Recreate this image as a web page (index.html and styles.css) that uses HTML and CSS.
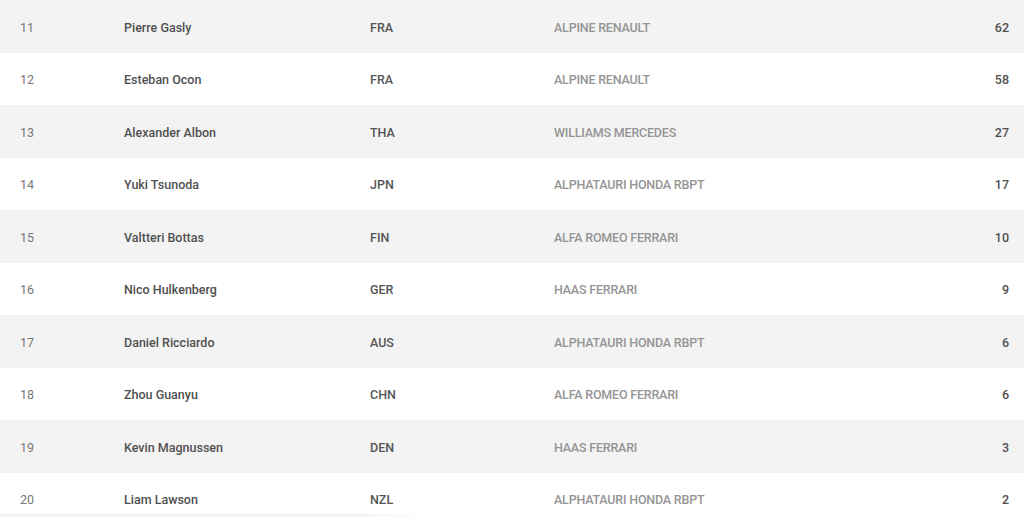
FILE: index.html
```html
<!DOCTYPE html>
<html lang="en">
<head>
<meta charset="utf-8">
<title>Driver Standings</title>
<link rel="stylesheet" href="styles.css">
</head>
<body>
<div class="standings">
  <table class="table">
    <colgroup>
      <col class="c-pos"><col class="c-name"><col class="c-nat"><col class="c-team"><col class="c-pts">
    </colgroup>
    <tbody>
      <tr><td class="pos">11</td><td class="name">Pierre Gasly</td><td class="nat">FRA</td><td class="team">ALPINE RENAULT</td><td class="pts">62</td></tr>
      <tr><td class="pos">12</td><td class="name">Esteban Ocon</td><td class="nat">FRA</td><td class="team">ALPINE RENAULT</td><td class="pts">58</td></tr>
      <tr><td class="pos">13</td><td class="name">Alexander Albon</td><td class="nat">THA</td><td class="team">WILLIAMS MERCEDES</td><td class="pts">27</td></tr>
      <tr><td class="pos">14</td><td class="name">Yuki Tsunoda</td><td class="nat">JPN</td><td class="team">ALPHATAURI HONDA RBPT</td><td class="pts">17</td></tr>
      <tr><td class="pos">15</td><td class="name">Valtteri Bottas</td><td class="nat">FIN</td><td class="team">ALFA ROMEO FERRARI</td><td class="pts">10</td></tr>
      <tr><td class="pos">16</td><td class="name">Nico Hulkenberg</td><td class="nat">GER</td><td class="team">HAAS FERRARI</td><td class="pts">9</td></tr>
      <tr><td class="pos">17</td><td class="name">Daniel Ricciardo</td><td class="nat">AUS</td><td class="team">ALPHATAURI HONDA RBPT</td><td class="pts">6</td></tr>
      <tr><td class="pos">18</td><td class="name">Zhou Guanyu</td><td class="nat">CHN</td><td class="team">ALFA ROMEO FERRARI</td><td class="pts">6</td></tr>
      <tr><td class="pos">19</td><td class="name">Kevin Magnussen</td><td class="nat">DEN</td><td class="team">HAAS FERRARI</td><td class="pts">3</td></tr>
      <tr><td class="pos">20</td><td class="name">Liam Lawson</td><td class="nat">NZL</td><td class="team">ALPHATAURI HONDA RBPT</td><td class="pts">2</td></tr>
    </tbody>
  </table>
</div>
<div class="scroll-fade"></div>
</body>
</html>
```
FILE: styles.css
```css
html, body {
  margin: 0;
  padding: 0;
  background: #fff;
  overflow: hidden;
}
body {
  font-family: Roboto, "Noto Sans", sans-serif;
  font-size: 12.5px;
  color: #4a4a4a;
}
.standings {
  width: 1024px;
}
.table {
  width: 100%;
  border-collapse: collapse;
  table-layout: fixed;
}
.c-pos { width: 124px; }
.c-name { width: 246px; }
.c-nat { width: 184px; }
.c-team { width: auto; }
.c-pts { width: 120px; }
.table tr {
  height: 52.5px;
}
.table tr:nth-child(odd) {
  background: #f3f3f3;
}
.table td {
  padding: 2px 0 0 0;
  vertical-align: middle;
  white-space: nowrap;
  font-weight: 500;
}
.pos {
  padding-left: 20px !important;
  color: #777;
  font-weight: 400 !important;
}
.name {
  color: #505050;
}
.nat {
  color: #555;
}
.team {
  color: #959595;
  letter-spacing: -0.2px;
}
.pts {
  text-align: right;
  padding-right: 15px !important;
  color: #505050;
}
.scroll-fade {
  position: fixed;
  left: 0;
  bottom: 0;
  width: 430px;
  height: 3px;
  background: linear-gradient(to right, #f4f4f4 0%, #f5f5f5 85%, rgba(255,255,255,0) 100%);
}
```
